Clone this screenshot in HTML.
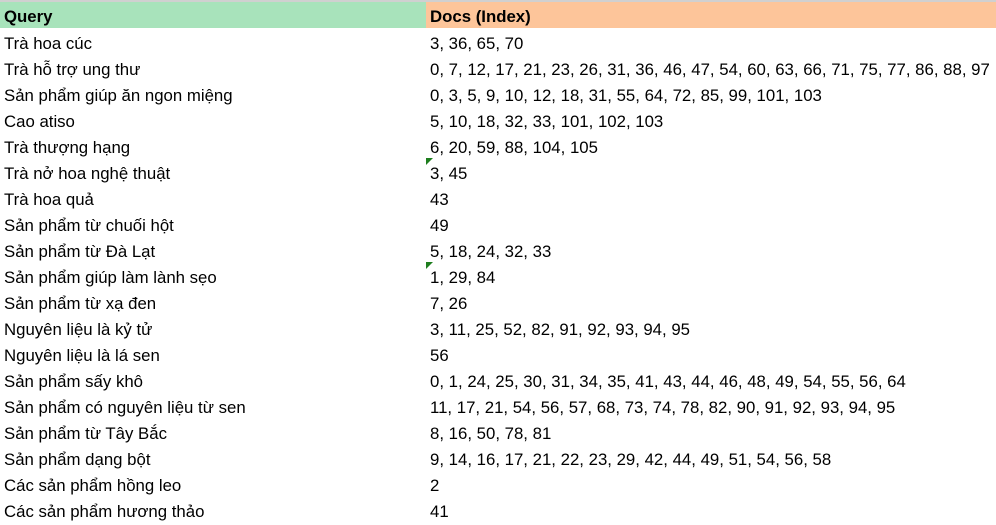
<!DOCTYPE html>
<html><head><meta charset="utf-8"><style>
body{margin:0;width:996px;height:524px;overflow:hidden;background:#fff;font-family:"Liberation Sans",Arial,sans-serif;font-size:16.8px;color:#000;position:relative}
.top{position:absolute;left:0;top:0;width:996px;height:2px;background:#d0d0d0}
.h{position:absolute;top:2px;height:26px;line-height:30px;font-weight:bold;overflow:hidden}
.r{position:absolute;left:0;width:996px;height:26px;line-height:26px}
.a{position:absolute;left:4px}
.b{position:absolute;left:430px;white-space:nowrap}
.t{position:absolute;left:426px;width:0;height:0;border-top:7px solid #1e7e1e;border-right:7px solid transparent}
</style></head><body>
<div class="top"></div>
<div class="h" style="left:0;width:426px;background:#a8e3bb"><span style="padding-left:4px">Query</span></div>
<div class="h" style="left:426px;width:570px;background:#fdc59a"><span style="padding-left:4px">Docs (Index)</span></div>
<div class="r" style="top:31px"><span class="a">Trà hoa cúc</span><span class="b">3, 36, 65, 70</span></div>
<div class="r" style="top:57px"><span class="a">Trà hỗ trợ ung thư</span><span class="b">0, 7, 12, 17, 21, 23, 26, 31, 36, 46, 47, 54, 60, 63, 66, 71, 75, 77, 86, 88, 97</span></div>
<div class="r" style="top:83px"><span class="a">Sản phẩm giúp ăn ngon miệng</span><span class="b">0, 3, 5, 9, 10, 12, 18, 31, 55, 64, 72, 85, 99, 101, 103</span></div>
<div class="r" style="top:109px"><span class="a">Cao atiso</span><span class="b">5, 10, 18, 32, 33, 101, 102, 103</span></div>
<div class="r" style="top:135px"><span class="a">Trà thượng hạng</span><span class="b">6, 20, 59, 88, 104, 105</span></div>
<div class="r" style="top:161px"><span class="a">Trà nở hoa nghệ thuật</span><span class="b">3, 45</span></div>
<div class="r" style="top:187px"><span class="a">Trà hoa quả</span><span class="b">43</span></div>
<div class="r" style="top:213px"><span class="a">Sản phẩm từ chuối hột</span><span class="b">49</span></div>
<div class="r" style="top:239px"><span class="a">Sản phẩm từ Đà Lạt</span><span class="b">5, 18, 24, 32, 33</span></div>
<div class="r" style="top:265px"><span class="a">Sản phẩm giúp làm lành sẹo</span><span class="b">1, 29, 84</span></div>
<div class="r" style="top:291px"><span class="a">Sản phẩm từ xạ đen</span><span class="b">7, 26</span></div>
<div class="r" style="top:317px"><span class="a">Nguyên liệu là kỷ tử</span><span class="b">3, 11, 25, 52, 82, 91, 92, 93, 94, 95</span></div>
<div class="r" style="top:343px"><span class="a">Nguyên liệu là lá sen</span><span class="b">56</span></div>
<div class="r" style="top:369px"><span class="a">Sản phẩm sấy khô</span><span class="b">0, 1, 24, 25, 30, 31, 34, 35, 41, 43, 44, 46, 48, 49, 54, 55, 56, 64</span></div>
<div class="r" style="top:395px"><span class="a">Sản phẩm có nguyên liệu từ sen</span><span class="b">11, 17, 21, 54, 56, 57, 68, 73, 74, 78, 82, 90, 91, 92, 93, 94, 95</span></div>
<div class="r" style="top:421px"><span class="a">Sản phẩm từ Tây Bắc</span><span class="b">8, 16, 50, 78, 81</span></div>
<div class="r" style="top:447px"><span class="a">Sản phẩm dạng bột</span><span class="b">9, 14, 16, 17, 21, 22, 23, 29, 42, 44, 49, 51, 54, 56, 58</span></div>
<div class="r" style="top:473px"><span class="a">Các sản phẩm hồng leo</span><span class="b">2</span></div>
<div class="r" style="top:499px"><span class="a">Các sản phẩm hương thảo</span><span class="b">41</span></div>
<div class="t" style="top:158px"></div>
<div class="t" style="top:262px"></div>
</body></html>
